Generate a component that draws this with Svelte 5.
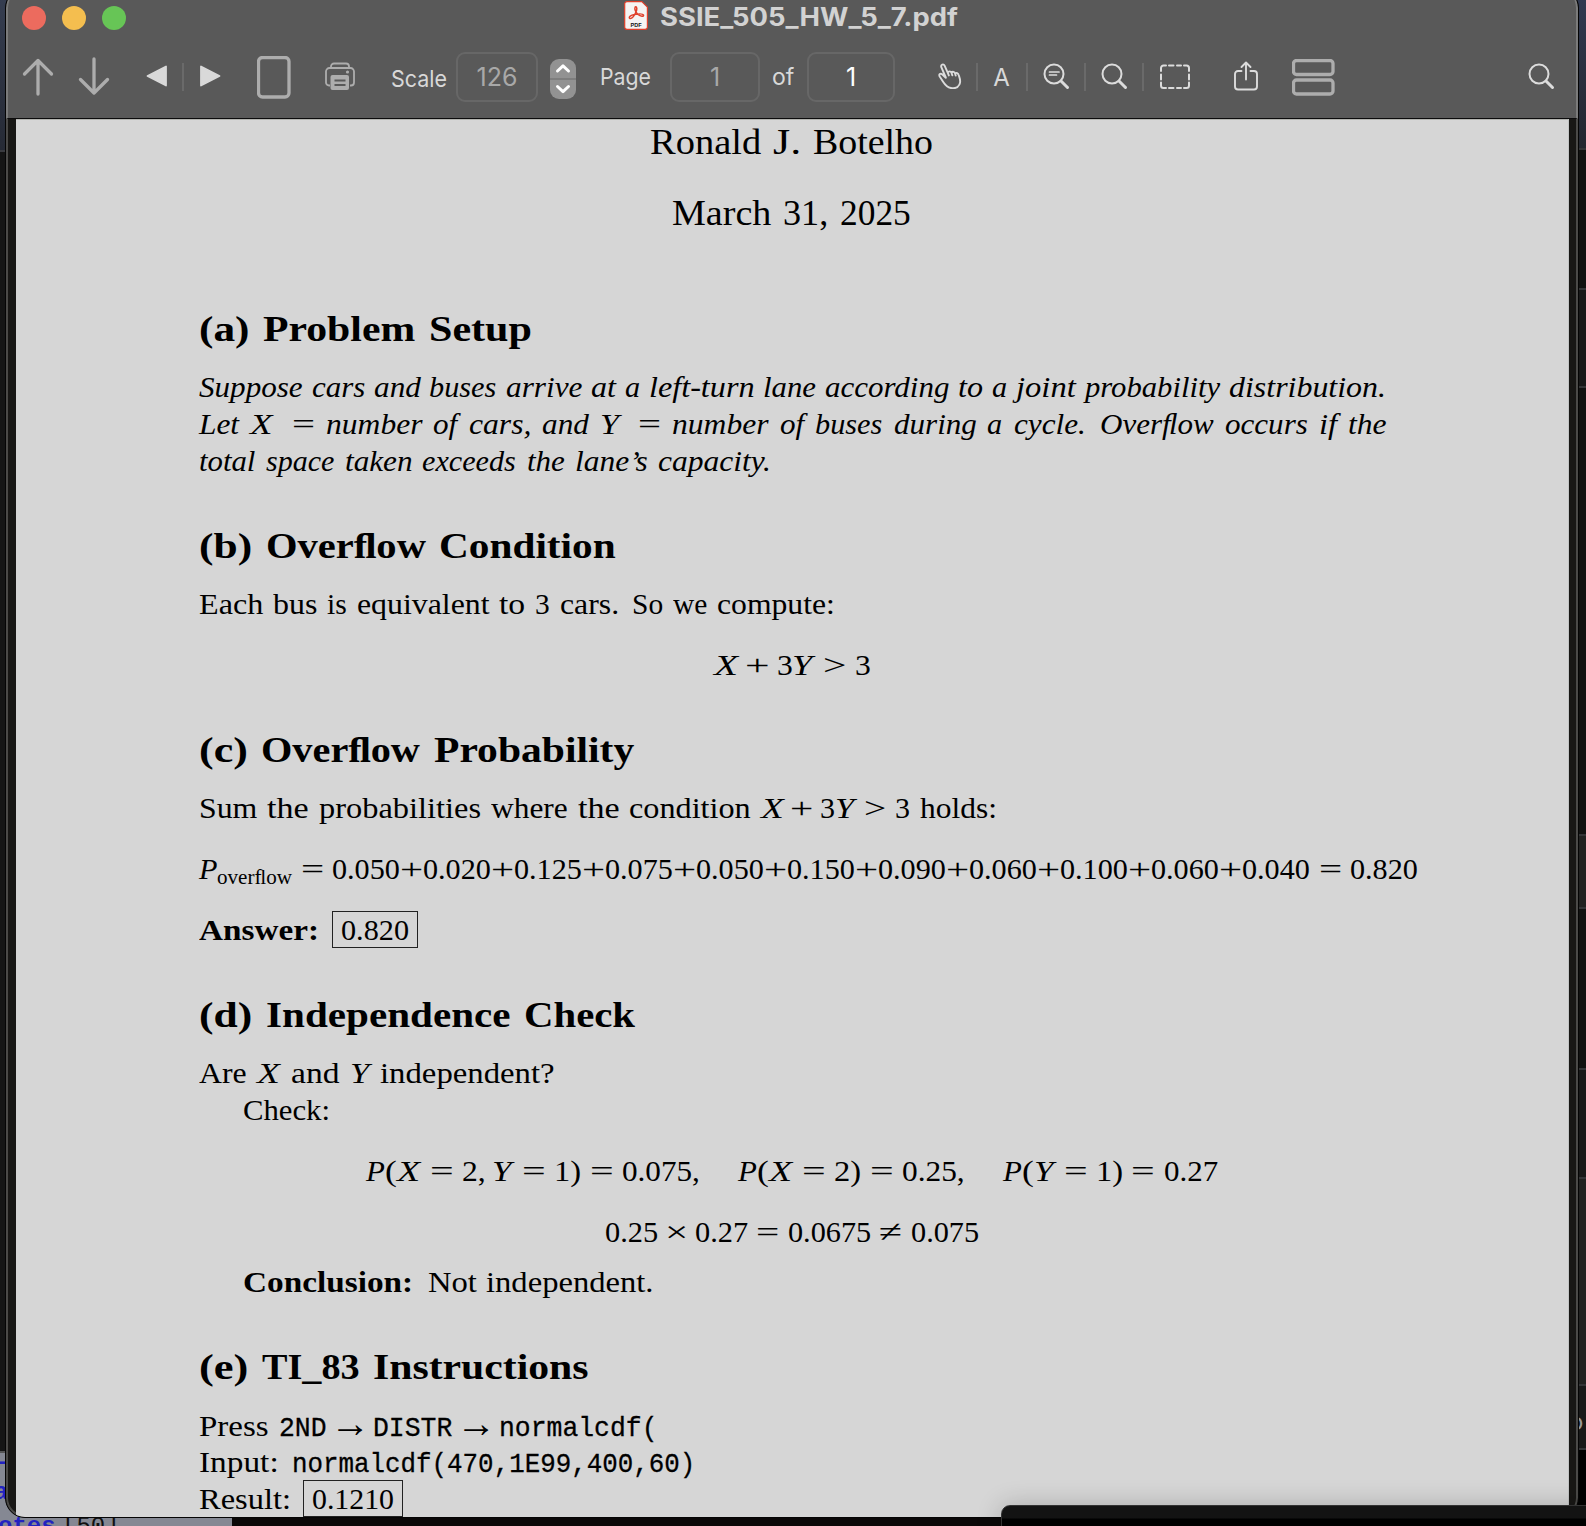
<script>
  const roman = {
    a: 500, b: 556, c: 444, d: 556, e: 444, f: 306, g: 500, h: 556, i: 278, j: 306, k: 528, l: 278, m: 833,
    n: 556, o: 500, p: 556, q: 528, r: 392, s: 394, t: 389, u: 556, v: 528, w: 722, x: 528, y: 528, z: 444,
    A: 750, B: 708, C: 722, E: 681, I: 361, J: 514, M: 917, N: 750, P: 681, R: 736, S: 556,
    '.': 278, ',': 278, ':': 278, '(': 389, ')': 389, '?': 472, ' ': 333, 'ﬂ': 556
  };
  const italic = {
    a: 511, b: 460, c: 460, d: 511, e: 460, f: 307, g: 460, h: 511, i: 307, j: 307, k: 460, l: 256, m: 818,
    n: 562, o: 511, p: 511, q: 460, r: 422, s: 409, t: 332, u: 537, v: 460, w: 664, x: 464, y: 486, z: 409,
    L: 562, O: 766, S: 562, '.': 307, ',': 307, '-': 358, '’': 307, ' ': 358, 'ﬂ': 562
  };
  const bold = {
    a: 547, b: 625, c: 513, d: 625, e: 513, f: 344, g: 562, h: 625, i: 312, j: 344, k: 594, l: 312, m: 937,
    n: 625, o: 562, p: 625, q: 594, r: 459, s: 444, t: 437, u: 625, v: 594, w: 812, x: 594, y: 594,
    A: 850, C: 812, I: 419, O: 845, P: 769, S: 625, T: 782, '(': 420, ')': 420, ':': 312, ' ': 375, _: 350, 'ﬂ': 625
  };
  const math = { X: 760, Y: 640, P: 620, ' ': 278, ',': 278, '.': 278, '(': 389, ')': 389 };
  const tables = { r: roman, i: italic, b: bold, m: math, n: math, t: {}, s: roman };
  const operators = '=+>×≠→';

  function glyph(style, ch) {
    if (ch === '\u2005') return 0.22;
    if (ch === '\u2003') return 1.05;
    if (ch === '→') return 1;
    if (operators.includes(ch)) return ch === '>' ? 0.74 : 0.778;
    if (style === 't') return 0.525;
    const w = tables[style][ch] ?? (style === 'b' ? 562 : 500);
    return (w / 1000) * (style === 's' ? 0.69 : 1);
  }

  // Splits styled runs into words, spaces and operators, then sizes them to the line's measure.
  function typeset(line) {
    const pieces = [];
    for (const [style, text] of line.runs) {
      for (const part of text.split(/([ \u2005\u2003]|[=+>×≠→])/).filter(Boolean)) {
        let w = [...part].reduce((sum, ch) => sum + glyph(style, ch), 0);
        const blank = /^[ \u2005\u2003]$/.test(part);
        const before = pieces.length ? pieces[pieces.length - 1].text : '';
        if (part === ' ' && style !== 'm' && before !== 'J.') {
          if (/\.$/.test(before)) w += 0.12;
          if (/:$/.test(before)) w += 0.11;
        }
        if (part === ' ' && /^[XY]$/.test(before)) w += 0.05;
        const op = operators.includes(part);
        pieces.push({ text: part, w, blank, style: part === '→' ? 'arrow' : op ? 'op' : style });
      }
    }
    const inked = pieces.filter((p) => !p.blank).reduce((s, p) => s + p.w, 0);
    const space = pieces.filter((p) => p.blank).reduce((s, p) => s + p.w, 0);
    let ink = line.w / (inked + space);
    let gap = ink;
    if (line.justify) {
      ink = 29.6;
      gap = (line.w - inked * ink) / space;
    }
    return pieces.map((p) => {
      const px = p.w * (p.blank ? gap : ink);
      return { ...p, px, ink: p.style === 'arrow' ? px * 1.33 : px };
    });
  }

  const lines = [
    { x: 650, y: 154.5, w: 283, size: 'large', runs: [['r', 'Ronald J. Botelho']] },
    { x: 672, y: 225.5, w: 239, size: 'large', runs: [['r', 'March 31, 2025']] },
    { x: 199, y: 342, w: 333, size: 'head', runs: [['b', '(a) Problem Setup']] },
    { x: 199, y: 398, w: 1187, justify: true, runs: [['i', 'Suppose cars and buses arrive at a left-turn lane according to a joint probability distribution.']] },
    { x: 199, y: 435, w: 1188, justify: true, runs: [['i', 'Let '], ['m', 'X'], ['i', ' \u2005= number of cars, and '], ['m', 'Y'], ['i', ' \u2005= number of buses during a cycle. Overﬂow occurs if the']] },
    { x: 199, y: 472, w: 572, runs: [['i', 'total space taken exceeds the lane’s capacity.']] },
    { x: 199, y: 559, w: 417, size: 'head', runs: [['b', '(b) Overﬂow Condition']] },
    { x: 199, y: 615, w: 636, runs: [['r', 'Each bus is equivalent to 3 cars. So we compute:']] },
    { x: 714, y: 676, w: 157, runs: [['m', 'X\u2005'], ['n', '+\u20053'], ['m', 'Y '], ['n', '>'], ['m', ' '], ['n', '3']] },
    { x: 199, y: 763, w: 435, size: 'head', runs: [['b', '(c) Overﬂow Probability']] },
    { x: 199, y: 819, w: 798, runs: [['r', 'Sum the probabilities where the condition '], ['m', 'X\u2005'], ['n', '+\u20053'], ['m', 'Y '], ['n', '>'], ['m', ' '], ['n', '3'], ['r', ' holds:']] },
    { x: 199, y: 880, w: 1219, runs: [['m', 'P'], ['s', 'overﬂow'], ['m', ' '], ['n', '='], ['m', ' '], ['n', '0.050+0.020+0.125+0.075+0.050+0.150+0.090+0.060+0.100+0.060+0.040'], ['m', ' '], ['n', '='], ['m', ' '], ['n', '0.820']] },
    { x: 199, y: 940, w: 120, runs: [['b', 'Answer:']], box: '0.820', boxGap: 13, boxW: 86 },
    { x: 199, y: 1028, w: 436, size: 'head', runs: [['b', '(d) Independence Check']] },
    { x: 199, y: 1084, w: 356, runs: [['r', 'Are '], ['m', 'X'], ['r', ' and '], ['m', 'Y'], ['r', ' independent?']] },
    { x: 243, y: 1121, w: 87, runs: [['r', 'Check:']] },
    { x: 366, y: 1182, w: 852, runs: [['m', 'P'], ['n', '('], ['m', 'X '], ['n', '='], ['m', ' '], ['n', '2,\u2005'], ['m', 'Y '], ['n', '='], ['m', ' '], ['n', '1)'], ['m', ' '], ['n', '='], ['m', ' '], ['n', '0.075,\u2003'], ['m', '\u2005P'], ['n', '('], ['m', 'X '], ['n', '='], ['m', ' '], ['n', '2)'], ['m', ' '], ['n', '='], ['m', ' '], ['n', '0.25,\u2003'], ['m', '\u2005P'], ['n', '('], ['m', 'Y '], ['n', '='], ['m', ' '], ['n', '1)'], ['m', ' '], ['n', '='], ['m', ' '], ['n', '0.27']] },
    { x: 605, y: 1243, w: 374, runs: [['n', '0.25\u2005×\u20050.27'], ['m', ' '], ['n', '='], ['m', ' '], ['n', '0.0675'], ['m', ' '], ['n', '≠'], ['m', ' '], ['n', '0.075']] },
    { x: 243, y: 1293, w: 411, runs: [['b', 'Conclusion: '], ['r', 'Not independent.']] },
    { x: 199, y: 1380, w: 390, size: 'head', runs: [['b', '(e) TI_83 Instructions']] },
    { x: 199, y: 1437, w: 459, runs: [['r', 'Press '], ['t', '2ND'], ['m', ' '], ['n', '→'], ['m', ' '], ['t', 'DISTR'], ['m', ' '], ['n', '→'], ['m', ' '], ['t', 'normalcdf(']] },
    { x: 199, y: 1473, w: 496, runs: [['r', 'Input: '], ['t', 'normalcdf(470,1E99,400,60)']] },
    { x: 199, y: 1509, w: 92, runs: [['r', 'Result:']], box: '0.1210', boxGap: 12, boxW: 100 }
  ];

  const ROW = 37;
  const pageTop = 119;
  const baseOf = (line) => (line.size ? 30.8 : 28.7);
  let bottom = pageTop;
  const rows = lines.map((line) => {
    const top = line.y - baseOf(line);
    const gap = top - bottom;
    bottom = top + ROW;
    return { ...line, gap, pieces: typeset(line) };
  });

  const bands = [
    { h: 150, tone: 'sky' }, { h: 140, tone: 'dark' }, { h: 98, tone: 'mid' }, { h: 448, tone: 'dark' },
    { h: 73, tone: 'lit' }, { h: 161, tone: 'dark' }, { h: 109, tone: 'mid' }, { h: 207, tone: 'lit' },
    { h: 64, tone: 'mid', text: 'o' }
  ];

  function fit(node, width) {
    const natural = node.getBoundingClientRect().width;
    if (natural) node.style.transform = `scaleX(${width / natural})`;
  }
</script>

<div class="desktop">
  <div class="behind left-top"></div>
  <div class="behind left-mid"></div>
  <div class="behind left-low"><span>–</span><span>a</span><span>otes <em>[50]</em></span></div>
  <div class="behind right">
    {#each bands as band}
      <div class={['band', band.tone]} style:height="{band.h}px">{band.text ?? ''}</div>
    {/each}
  </div>
  <div class="window">
    <header>
      <div class="titlebar">
        <div class="lights"><i class="close"></i><i class="min"></i><i class="zoom"></i></div>
        <div class="title">
          <svg width="24" height="29" viewBox="0 0 24 29">
            <path d="M3 .6h14.800l5.600 5.600v19.900a2.300 2.300 0 0 1-2.300 2.300H3a2.300 2.300 0 0 1-2.300-2.300V3A2.300 2.300 0 0 1 3 .6z" fill="#f5f4f3" stroke="#e0402b" stroke-width="1.2" />
            <path d="M5.600 17.200c-1.200-1.400 1.200-3 5-3.700 3.900-.7 8.300-.8 8.900.6.6 1.700-2.900 1.600-5.500-.6-2.300-2-3.800-5.400-2.900-7.300.8-1.500 2.300.1 1.500 3-.8 3.100-4.800 9.900-7 8z" fill="none" stroke="#e0402b" stroke-width="1.5" />
            <text x="12" y="25.700" text-anchor="middle" textLength="11" lengthAdjust="spacingAndGlyphs">PDF</text>
          </svg>
          <span class="name"><span class="scaled" use:fit={298}>SSIE_505_HW_5_7.pdf</span></span>
        </div>
      </div>
      <div class="toolbar">
        <svg class="ic up" width="32" height="40" viewBox="0 0 32 40"><path d="M16 37V4M2.500 17 16 3.500 29.500 17" /></svg>
        <svg class="ic down" width="32" height="40" viewBox="0 0 32 40"><path d="M16 2v34M2.500 22.500 16 36l13.500-13.500" /></svg>
        <svg class="tri prev" width="22" height="22" viewBox="0 0 22 22"><path d="M1.500 11 20 1.500v19z" /></svg>
        <i class="sep s1"></i>
        <svg class="tri next" width="22" height="22" viewBox="0 0 22 22"><path d="M20.500 11 2 1.500v19z" /></svg>
        <svg class="ic sheet" width="34" height="43" viewBox="0 0 34 43"><rect x="1.500" y="1.500" width="30.500" height="39.500" rx="4" /></svg>
        <svg class="printer" width="30" height="29" viewBox="0 0 30 29">
          <path d="M6 6V4.500a3 3 0 0 1 3-3h12a3 3 0 0 1 3 3V6M5 23.500H4a3 3 0 0 1-3-3V9.500a3.500 3.500 0 0 1 3.500-3.500h21A3.500 3.500 0 0 1 29 9.500v11a3 3 0 0 1-3 3h-1" fill="none" stroke="#adadad" stroke-width="1.800" />
          <rect x="5.500" y="13" width="18.500" height="15" rx="2" fill="#adadad" />
          <path d="M9.500 18.500h11M9.500 23h11" stroke="#595959" stroke-width="1.800" />
          <circle cx="22.500" cy="10" r="1.600" fill="#adadad" />
        </svg>
        <span class="label scale"><span class="scaled" use:fit={56}>Scale</span></span>
        <span class="field f1 dim">126</span>
        <svg class="stepper" width="26" height="40" viewBox="0 0 26 40">
          <rect width="26" height="40" rx="9" fill="#929292" />
          <path d="M0 20h26" stroke="#777" stroke-width="1.500" />
          <path d="m7.500 12 5.500-5.200L18.500 12M7.500 27.500l5.500 5.200 5.500-5.200" fill="none" stroke="#fff" stroke-width="3" stroke-linecap="round" stroke-linejoin="round" />
        </svg>
        <span class="label page"><span class="scaled" use:fit={51}>Page</span></span>
        <span class="field f2 dim">1</span>
        <span class="label of">of</span>
        <span class="field f3">1</span>
        <svg class="line hand" width="24" height="26" viewBox="0 0 24 26">
          <path d="M7.800 14.500 3.300 4.200C2.500 1.400 5.500.4 6.600 2.700l3.200 7.100c.6-2 3-1.900 3.700-.1 1-1.500 3.100-1 3.600.7 1.300-1.100 3-.3 3.500 1.400 1 3.100 2.700 6.100.9 9.600-1.500 3-5 4.300-8.600 3.600-4-.8-5.900-3.300-8-6.600L1.700 13.500c-1.200-2.300.7-3.500 2.400-2.200l3.700 3.500M9.800 9.800l1 2.600M13.500 9.700l.8 2.600M17.100 10.400l.6 2.200" />
        </svg>
        <i class="sep s2"></i>
        <span class="letter">A</span>
        <i class="sep s3"></i>
        <svg class="mag m1" width="27" height="27" viewBox="0 0 27 27"><circle cx="11" cy="11" r="9.500" /><path d="m18 18 6.500 6.500" class="handle" /><path d="M6.500 9h9.500M6.500 12h7" class="thin" /></svg>
        <i class="sep s4"></i>
        <svg class="mag m2" width="27" height="27" viewBox="0 0 27 27"><circle cx="11" cy="11" r="9.500" /><path d="m18 18 6.500 6.500" class="handle" /></svg>
        <i class="sep s5"></i>
        <svg class="mag marquee" width="32" height="26" viewBox="0 0 32 26">
          <path d="M2 7V4a2.500 2.500 0 0 1 2.500-2.500H7M25 1.500h2.500A2.500 2.500 0 0 1 30 4v3M30 18.500v3a2.500 2.500 0 0 1-2.500 2.500H25M7 24H4.500A2.500 2.500 0 0 1 2 21.500v-3M10 1.500h4.500M18 1.500h4M10 24h4.500M18 24h4M2 10.500v5M30 10.500v5" />
        </svg>
        <svg class="line share" width="24" height="30" viewBox="0 0 24 30"><path d="M7.500 10H4a3 3 0 0 0-3 3v12.500a3 3 0 0 0 3 3h16a3 3 0 0 0 3-3V13a3 3 0 0 0-3-3h-3.500M12 18.500V1.800M7.500 6 12 1.500 16.500 6" /></svg>
        <svg class="ic split" width="43" height="37" viewBox="0 0 43 37"><rect x="1.500" y="1.500" width="39.500" height="14" rx="3" /><rect x="1.500" y="21" width="39.500" height="14" rx="3" /></svg>
        <svg class="mag m3" width="27" height="27" viewBox="0 0 27 27"><circle cx="11" cy="11" r="9.500" /><path d="m18 18 6.500 6.500" class="handle" /></svg>
      </div>
    </header>
    <main>
      <article>
        {#each rows as row}
          <p class={['row', row.size]} style:margin-top="{row.gap}px" style:margin-left="{row.x - 16}px">{#each row.pieces as p}<span class="piece" style:width="{p.px}px">{#if p.blank}{p.text}{:else}<span class={['scaled', p.style]} use:fit={p.ink}>{p.text}</span>{/if}</span>{/each}{#if row.box}<span class="answer" style:margin-left="{row.boxGap}px" style:width="{row.boxW}px"><span class="scaled" use:fit={row.boxW - 18}>{row.box}</span></span>{/if}</p>
        {/each}
      </article>
    </main>
  </div>
  <div class="overlay"></div>
</div>

<style>
  :global(body) {
    background: #000;
    overflow: hidden;
  }
  .desktop {
    position: relative;
    width: 1586px;
    height: 1526px;
    overflow: hidden;
    background: #0b0808;
  }
  .behind {
    position: absolute;
    font: 24px "Liberation Mono", monospace;
    color: #2222c0;
    overflow: hidden;
  }
  .left-top {
    left: 0;
    top: 0;
    width: 8px;
    height: 150px;
    background: linear-gradient(#353d50, #262a35);
    border-bottom: 2px solid #3a3b40;
  }
  .left-mid {
    left: 0;
    top: 152px;
    width: 8px;
    height: 1299px;
    background: #151515;
    border-bottom: 2px solid #555;
  }
  .left-low {
    left: 0;
    top: 1453px;
    width: 232px;
    height: 73px;
    background: #858893;
  }
  .left-low span {
    display: block;
    height: 30px;
    line-height: 20px;
    margin-left: -6px;
    font-weight: 700;
    white-space: nowrap;
  }
  .left-low span:last-child {
    margin: 4px 0 0 -2px;
  }
  em {
    font-style: normal;
    font-weight: 400;
    color: #111;
    margin-left: -8px;
  }
  .right {
    right: 0;
    top: 0;
    width: 10px;
    height: 1526px;
    background: #000;
  }
  .band {
    box-sizing: border-box;
    border-bottom: 2px solid #333436;
    font: 24px Inter, sans-serif;
    line-height: 72px;
    color: #999;
    text-indent: -7px;
  }
  .sky { background: linear-gradient(#303950, #23262e); }
  .dark { background: #111110; }
  .mid { background: #181818; }
  .lit { background: #212120; }
  .window {
    position: relative;
    box-sizing: border-box;
    width: 1574px;
    height: 1530px;
    margin: -12px 0 0 5px;
    border: 1px solid #050505;
    border-radius: 20px;
    overflow: hidden;
    background: #181715;
    box-shadow: inset 0 0 0 2px #4b4a48;
  }
  header {
    height: 130px;
    padding-top: 11px;
    box-sizing: border-box;
    background: #595959;
    border-left: 2px solid #7b7b7b;
    border-right: 2px solid #7b7b7b;
    border-bottom: 1px solid #0c0c0c;
    border-radius: 19px 19px 0 0;
    font-family: Inter, sans-serif;
    color: #d8d8d8;
  }
  .titlebar {
    height: 36px;
    display: flex;
    align-items: center;
  }
  .lights {
    display: flex;
    gap: 16px;
    margin-left: 14px;
  }
  .lights i {
    width: 24px;
    height: 24px;
    border-radius: 50%;
  }
  .close { background: #ec6b5e; }
  .min { background: #f4be4f; }
  .zoom { background: #67c556; }
  .title {
    display: flex;
    align-items: center;
    margin-left: 498px;
    height: 30px;
    margin-top: -5px;
  }
  .title text {
    font: bold 6px "Liberation Sans", sans-serif;
    fill: #111;
  }
  .name {
    margin-left: 12px;
    font-size: 25px;
    font-weight: 700;
    line-height: 30px;
    margin-top: 3px;
    white-space: nowrap;
    color: #d2d2d2;
  }
  .scaled {
    display: inline-block;
    transform-origin: 0 50%;
    white-space: pre;
  }
  .toolbar {
    height: 82px;
    display: flex;
    align-items: center;
    white-space: nowrap;
  }
  .toolbar > * {
    flex: none;
  }
  svg {
    display: block;
  }
  .ic {
    fill: none;
    stroke: #adadad;
    stroke-width: 3.300;
    stroke-linecap: round;
    stroke-linejoin: round;
  }
  .tri {
    fill: #d9d9d9;
    stroke: #d9d9d9;
    stroke-width: 1.800;
    stroke-linejoin: round;
  }
  .line {
    fill: none;
    stroke: #dcdcdc;
    stroke-width: 1.900;
    stroke-linecap: round;
    stroke-linejoin: round;
  }
  .mag {
    fill: none;
    stroke: #dcdcdc;
    stroke-width: 2;
    stroke-linecap: round;
  }
  .handle { stroke-width: 3; }
  .thin { stroke-width: 1.700; }
  .up { margin-left: 14px; }
  .down { margin-left: 24px; }
  .prev { margin-left: 36px; margin-top: -2px; }
  .sep {
    width: 2px;
    height: 28px;
    background: #6a6a6a;
  }
  .s1 { margin-left: 14px; }
  .next { margin-left: 15px; margin-top: -2px; }
  .sheet { margin-left: 36px; }
  .printer { margin-left: 34px; margin-top: -2px; }
  .label {
    font-size: 23px;
    line-height: 28px;
  }
  .scale { margin-left: 36px; width: 57px; margin-top: 3px; }
  .field {
    box-sizing: border-box;
    height: 50px;
    border: 2px solid #676767;
    border-radius: 9px;
    text-align: center;
    font-size: 25px;
    line-height: 46px;
    color: #fff;
  }
  .dim { color: #a8a8a8; }
  .f1 { margin-left: 8px; width: 82px; }
  .stepper { margin-left: 12px; margin-top: 4px; }
  .page { margin-left: 24px; width: 52px; }
  .f2 { margin-left: 18px; width: 90px; }
  .of { margin-left: 12px; width: 22px; }
  .f3 { margin-left: 13px; width: 88px; }
  .hand { margin-left: 43px; margin-top: -3px; }
  .s2 { margin-left: 14px; }
  .letter { margin-left: 15px; width: 17px; font-size: 24px; text-align: center; }
  .s3 { margin-left: 16px; }
  .m1 { margin-left: 15px; margin-top: -2px; }
  .s4 { margin-left: 14px; }
  .m2 { margin-left: 15px; margin-top: -2px; }
  .s5 { margin-left: 14px; }
  .marquee { margin-left: 15px; }
  .share { margin-left: 43px; margin-top: -3px; }
  .split { margin-left: 34px; }
  .m3 { margin-left: 193px; margin-top: -2px; }
  main {
    display: flow-root;
    height: 1398px;
    margin: 0 9px 0 10px;
    background: #d6d6d6;
    border-right: 1px solid #c2c4c4;
    box-shadow: inset 0 1px 0 #b3b4b0;
    color: #000;
    font: 30.300px "Liberation Serif", serif;
  }
  article {
    display: flow-root;
  }
  .row {
    height: 37px;
    margin: 0;
    line-height: 37px;
    white-space: pre;
  }
  .large,
  .head {
    font-size: 36.400px;
  }
  .piece {
    display: inline-block;
    white-space: pre;
  }
  .b { font-weight: 700; }
  .i,
  .m { font-style: italic; }
  .t {
    font-family: "Liberation Mono", monospace;
    font-size: 28px;
    -webkit-text-stroke: 0.300px #000;
  }
  .s {
    font-size: 22px;
    position: relative;
    top: 5px;
  }
  .arrow {
    font-size: 40px;
    line-height: 20px;
    margin-left: -5px;
    position: relative;
    top: 1px;
  }
  .answer {
    display: inline-block;
    box-sizing: border-box;
    height: 37px;
    padding-left: 8px;
    border: 1px solid #222;
    line-height: 37px;
  }
  .overlay {
    position: absolute;
    left: 1001px;
    top: 1505px;
    width: 600px;
    height: 40px;
    box-sizing: border-box;
    border: 1px solid #333;
    border-radius: 9px 0 0 0;
    background: linear-gradient(#131313 12px, #000 13px);
    box-shadow: 0 0 26px rgba(0, 0, 0, 0.2);
  }
</style>
